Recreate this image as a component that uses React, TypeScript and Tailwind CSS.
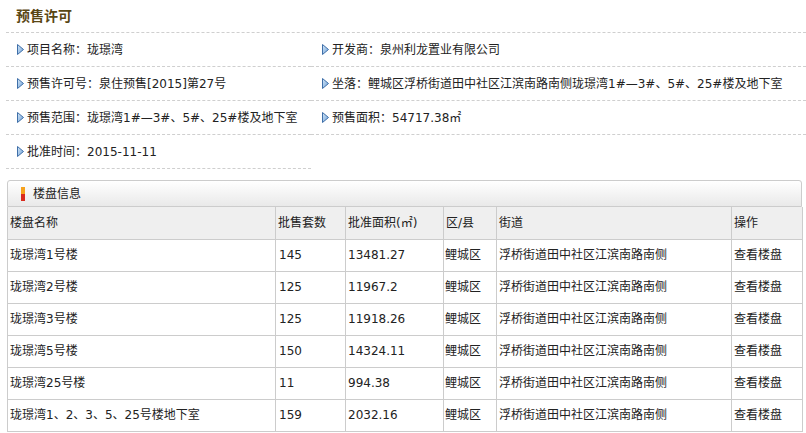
import React from "react";

interface InfoItem {
  label: string;
  value: string;
  wide?: boolean;
}

interface BuildingRow {
  name: string;
  units: string;
  area: string;
  district: string;
  street: string;
}

const items: InfoItem[] = [
  { label: "项目名称", value: "珑璟湾" },
  { label: "开发商", value: "泉州利龙置业有限公司", wide: true },
  { label: "预售许可号", value: "泉住预售[2015]第27号" },
  { label: "坐落", value: "鲤城区浮桥街道田中社区江滨南路南侧珑璟湾1#—3#、5#、25#楼及地下室", wide: true },
  { label: "预售范围", value: "珑璟湾1#—3#、5#、25#楼及地下室" },
  { label: "预售面积", value: "54717.38㎡", wide: true },
  { label: "批准时间", value: "2015-11-11" },
];

const rows: BuildingRow[] = [
  { name: "珑璟湾1号楼", units: "145", area: "13481.27", district: "鲤城区", street: "浮桥街道田中社区江滨南路南侧" },
  { name: "珑璟湾2号楼", units: "125", area: "11967.2", district: "鲤城区", street: "浮桥街道田中社区江滨南路南侧" },
  { name: "珑璟湾3号楼", units: "125", area: "11918.26", district: "鲤城区", street: "浮桥街道田中社区江滨南路南侧" },
  { name: "珑璟湾5号楼", units: "150", area: "14324.11", district: "鲤城区", street: "浮桥街道田中社区江滨南路南侧" },
  { name: "珑璟湾25号楼", units: "11", area: "994.38", district: "鲤城区", street: "浮桥街道田中社区江滨南路南侧" },
  { name: "珑璟湾1、2、3、5、25号楼地下室", units: "159", area: "2032.16", district: "鲤城区", street: "浮桥街道田中社区江滨南路南侧" },
];

const headers = ["楼盘名称", "批售套数", "批准面积(㎡)", "区/县", "街道", "操作"];

const Arrow = () => (
  <svg width="7" height="11" viewBox="0 0 7 11" className="shrink-0 mr-[3px]">
    <defs>
      <linearGradient id="arr" x1="0" y1="0" x2="1" y2="1">
        <stop offset="0" stopColor="#d6e8f8" />
        <stop offset="1" stopColor="#6c9fd6" />
      </linearGradient>
    </defs>
    <polygon points="0.5,0.5 6.5,5.5 0.5,10.5" fill="url(#arr)" stroke="#3f6fa8" strokeWidth="1" />
  </svg>
);

const Item = ({ label, value, wide }: InfoItem) => (
  <div
    className={
      wide
        ? "w-[495px] h-[34px] flex items-center pl-[11px] border-b border-dashed border-[#cfcfcf]"
        : "w-[305px] h-[34px] flex items-center pl-[11px] border-b border-dashed border-[#cfcfcf]"
    }
  >
    <Arrow />
    <span className="text-[12px] text-[#222] whitespace-nowrap">
      {label}：{value}
    </span>
  </div>
);

export default function App() {
  return (
    <div
      className="w-[806px] h-[433px] bg-white overflow-hidden"
      style={{ fontFamily: '"DejaVu Sans", "Noto Sans CJK SC", sans-serif' }}
    >
      <div className="ml-[6px]">
        <div className="h-[33px] pl-[10px] pb-[2px] flex items-center border-b border-dashed border-[#cfcfcf]">
          <span
            className="text-[14px] font-bold text-[#5a4714]"
            style={{ fontFamily: '"Noto Sans CJK SC", sans-serif' }}
          >
            预售许可
          </span>
        </div>
        <div className="flex flex-wrap">
          {items.map((it) => (
            <Item key={it.label} {...it} />
          ))}
        </div>
      </div>

      <div className="ml-[7px] mt-[11px] w-[795px]">
        <div className="h-[27px] flex items-center pl-[13px] border border-[#cccccc] rounded-t-[3px] bg-gradient-to-b from-white to-[#e9e9e9]">
          <div className="w-[4px] h-[14px] flex flex-col mr-[8px]">
            <div className="flex-1 bg-[#f6a21d]" />
            <div className="flex-1 bg-[#d92a1d]" />
          </div>
          <span className="text-[12px] text-[#222]">楼盘信息</span>
        </div>
        <table className="w-[795px] table-fixed border-collapse text-[12px] text-[#222]">
          <colgroup>
            <col className="w-[268px]" />
            <col className="w-[70px]" />
            <col className="w-[98px]" />
            <col className="w-[53px]" />
            <col className="w-[235px]" />
            <col className="w-[71px]" />
          </colgroup>
          <thead>
            <tr className="bg-[#efefef]">
              {headers.map((h) => (
                <th
                  key={h}
                  className="h-[32px] border border-[#cccccc] border-t-0 pl-[2px] text-left font-normal whitespace-nowrap"
                >
                  {h}
                </th>
              ))}
            </tr>
          </thead>
          <tbody>
            {rows.map((r) => (
              <tr key={r.name}>
                <td className="h-[32px] border border-[#cccccc] pl-[2px] whitespace-nowrap">{r.name}</td>
                <td className="border border-[#cccccc] pl-[3px]">{r.units}</td>
                <td className="border border-[#cccccc] pl-[2px]">{r.area}</td>
                <td className="border border-[#cccccc] pl-[1px]">{r.district}</td>
                <td className="border border-[#cccccc] pl-[2px] whitespace-nowrap">{r.street}</td>
                <td className="border border-[#cccccc] pl-[2px]">查看楼盘</td>
              </tr>
            ))}
          </tbody>
        </table>
      </div>
    </div>
  );
}
